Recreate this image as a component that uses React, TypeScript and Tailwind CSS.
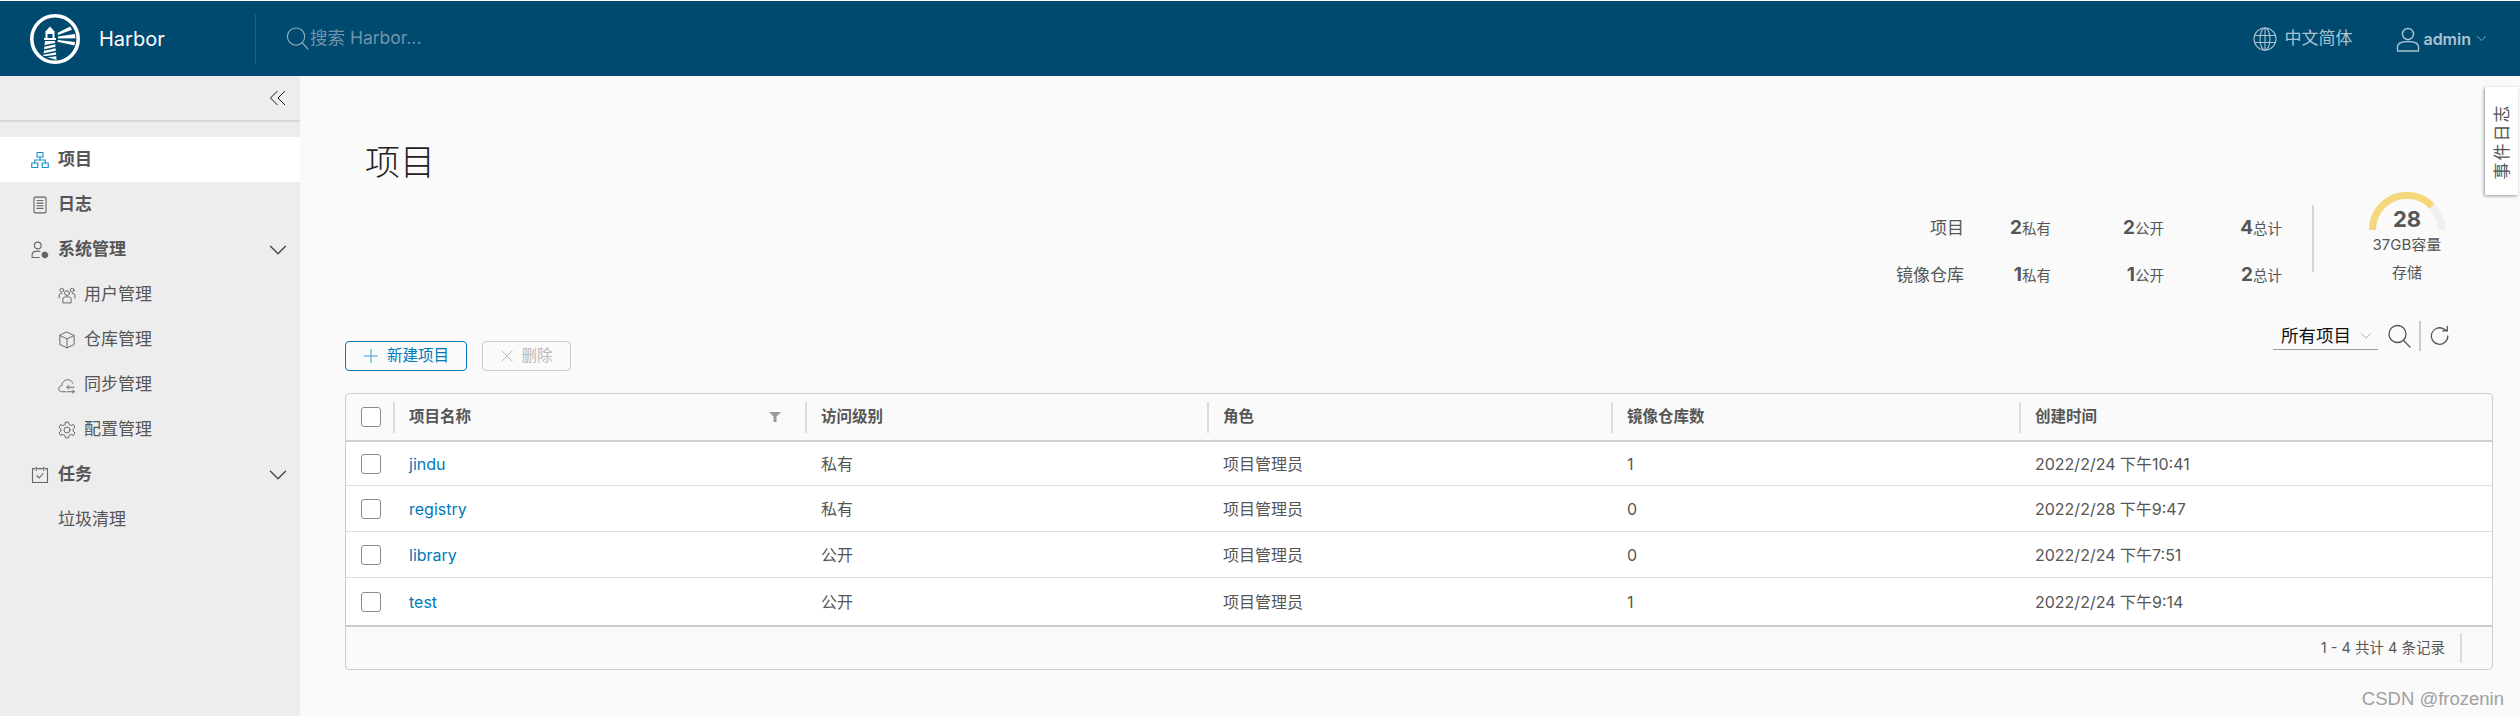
import React from "react";

const S = ({ className, children, vb = "0 0 24 24", sw = 1.3 }: { className: string; children: React.ReactNode; vb?: string; sw?: number }) => (
  <svg viewBox={vb} fill="none" stroke="currentColor" strokeWidth={sw} strokeLinecap="round" strokeLinejoin="round" className={className}>
    {children}
  </svg>
);

const Logo = () => (
  <svg viewBox="0 0 50 50" className="w-[50px] h-[50px]">
    <circle cx="25" cy="25" r="23.2" fill="none" stroke="#fff" strokeWidth="3.6" />
    <path d="M15 18 L20 12.5 L25 18 Z" fill="#fff" />
    <path d="M15.5 18 H24.5 V24 H22.5 V20 H17.5 V24 H15.5 Z" fill="#fff" />
    <path d="M14 24 H26 V26 H14 Z" fill="#fff" />
    <path d="M15 27 L25 27 L26.5 46 L13.5 42 Z" fill="#fff" />
    <path d="M14.5 32 L25.5 29.5 M14.2 36 L25.8 33.5 M14 40 L26 37.5 M14 43 L26.2 41.5" stroke="#004a70" strokeWidth="1.3" />
    <path d="M27.5 19 L40 12.5 L42 15.8 L28 21 Z" fill="#fff" />
    <path d="M28 22.5 L45 20 L45.5 24.2 L28 24.5 Z" fill="#fff" />
    <path d="M28 26 L45 28 L44.5 31.5 L27.5 27.8 Z" fill="#fff" />
  </svg>
);

const Chevron = ({ className }: { className: string }) => (
  <S className={className} sw={1.6}><path d="M3 7.5 L12 16.5 L21 7.5" /></S>
);

const SideHead = ({ icon, label, active, chevron }: { icon: React.ReactNode; label: string; active?: boolean; chevron?: boolean }) => (
  <div className={`h-[45px] flex items-center pl-[31px] pr-[12px] gap-[9px] ${active ? "bg-white" : ""}`}>
    {icon}
    <span className="flex-1 text-[17px] font-bold text-[#565656]">{label}</span>
    {chevron && <Chevron className="w-[20px] h-[20px] text-[#444]" />}
  </div>
);

const SideSub = ({ icon, label }: { icon?: React.ReactNode; label: string }) => (
  <div className="h-[45px] flex items-center gap-[8px] pl-[58px]">
    {icon}
    <span className="text-[17px] text-[#565656]">{label}</span>
  </div>
);

const Sidebar = () => (
  <aside className="w-[300px] shrink-0 bg-[#ededed] flex flex-col">
    <div className="h-[46px] border-b-2 border-[#d7d7d7] flex items-center justify-end pr-[13px] mb-[15px]">
      <S className="w-[18px] h-[18px] text-[#111]" sw={1.3}>
        <path d="M11 3 L2 12 L11 21 M21 3 L12 12 L21 21" />
      </S>
    </div>
    <SideHead active label="项目" icon={
      <S className="w-[18px] h-[18px] text-[#1b8fd0]" sw={1.5}>
        <rect x="8" y="2" width="8" height="6" /><rect x="1" y="16" width="8" height="6" /><rect x="15" y="16" width="8" height="6" />
        <path d="M12 8 V12 M5 16 V12 H19 V16" />
      </S>} />
    <SideHead label="日志" icon={
      <S className="w-[18px] h-[18px] text-[#666]" sw={1.5}>
        <rect x="4" y="1.5" width="16" height="21" rx="1.5" /><path d="M8 6 H16 M8 9.5 H16 M8 13 H16 M8 16.5 H16" />
      </S>} />
    <SideHead chevron label="系统管理" icon={
      <S className="w-[18px] h-[18px] text-[#666]" sw={1.5}>
        <circle cx="9" cy="6" r="4.5" /><path d="M1.5 22 V18 C1.5 15 5 13.5 9 13.5 C10 13.5 11 13.6 12 13.9 M1.5 22 H11" />
        <circle cx="18.5" cy="18.5" r="3.2" fill="currentColor" strokeWidth="2.6" strokeDasharray="2 1" />
      </S>} />
    <SideSub label="用户管理" icon={
      <S className="w-[18px] h-[18px] text-[#666]">
        <circle cx="12" cy="9.5" r="3.2" /><path d="M6.5 22 V17 C6.5 15 9 14.5 12 14.5 C15 14.5 17.5 15 17.5 17 V22 Z" />
        <circle cx="5" cy="5.5" r="2.5" /><circle cx="19" cy="5.5" r="2.5" /><path d="M1.5 16 V12 C1.5 10.5 3 10 5 10 M22.5 16 V12 C22.5 10.5 21 10 19 10" />
      </S>} />
    <SideSub label="仓库管理" icon={
      <S className="w-[18px] h-[18px] text-[#666]">
        <path d="M12 1.5 L21.5 6 V18 L12 22.5 L2.5 18 V6 Z M2.5 6 L12 10.5 L21.5 6 M12 10.5 V22.5" />
      </S>} />
    <SideSub label="同步管理" icon={
      <S className="w-[20px] h-[18px] -ml-[1px] mr-[-1px] text-[#666]">
        <path d="M10 21 H5 C2.5 21 1 19 1 17 C1 14.5 3 13 5 13 C5.5 8 9 5 13 5 C16 5 18.5 6.5 19.5 9.5" />
        <path d="M12 21 H21 M12 15 H21.5 M14.5 12.5 L12 15 L14.5 17.5 M19.5 18.5 L22 21 L19.5 23" />
      </S>} />
    <SideSub label="配置管理" icon={
      <S className="w-[18px] h-[18px] text-[#666]">
        <circle cx="12" cy="12" r="4" />
        <path d="M10 1.5 H14 L14.8 4.7 L17.5 6 L20.5 4.8 L22.5 8.2 L20.2 10.5 V13.5 L22.5 15.8 L20.5 19.2 L17.5 18 L14.8 19.3 L14 22.5 H10 L9.2 19.3 L6.5 18 L3.5 19.2 L1.5 15.8 L3.8 13.5 V10.5 L1.5 8.2 L3.5 4.8 L6.5 6 L9.2 4.7 Z" />
      </S>} />
    <SideHead chevron label="任务" icon={
      <S className="w-[18px] h-[18px] text-[#666]" sw={1.5}>
        <path d="M5 3.5 H2 V22 H22 V3.5 H19 M9 3.5 H15 M7 1.5 V6 M17 1.5 V6" /><path d="M8 13 L11 16 L16 10" />
      </S>} />
    <SideSub label="垃圾清理" />
  </aside>
);

const Stat = ({ n, label }: { n: number; label: string }) => (
  <div className="flex items-baseline justify-end text-[#565656] pb-[3px]">
    <span className="text-[19px] font-bold leading-none">{n}</span>
    <span className="text-[14.5px] leading-none">{label}</span>
  </div>
);

const Stats = () => (
  <div className="flex justify-end h-[100px] items-start">
    <div className="grid grid-cols-[70px_87px_113px_118px] grid-rows-[47px_47px] mt-[14px] items-center">
      <div className="text-right text-[17px] text-[#565656]">项目</div>
      <Stat n={2} label="私有" /><Stat n={2} label="公开" /><Stat n={4} label="总计" />
      <div className="text-right text-[17px] text-[#565656]">镜像仓库</div>
      <Stat n={1} label="私有" /><Stat n={1} label="公开" /><Stat n={2} label="总计" />
    </div>
    <div className="w-[2px] h-[67px] bg-[#d5d5d5] ml-[30px] mt-[14px]" />
    <div className="w-[120px] ml-[33px] mr-[26px] flex flex-col items-center">
      <div className="relative w-[76px] h-[40px]">
        <svg viewBox="0 0 76 40" className="w-[76px] h-[40px]">
          <path d="M3.5 39 A34.5 34.5 0 0 1 72.5 39" fill="none" stroke="#efefef" strokeWidth="7" />
          <path d="M3.5 39 A34.5 34.5 0 0 1 63 15" fill="none" stroke="#f6d87c" strokeWidth="7" />
        </svg>
        <span className="absolute inset-x-0 top-[15px] text-center text-[22px] font-bold leading-[26px] text-[#565656]">28</span>
      </div>
      <div className="text-[15px] text-[#565656] mt-[3px] leading-[22px]">37GB容量</div>
      <div className="text-[15px] text-[#565656] mt-[6px] leading-[22px]">存储</div>
    </div>
  </div>
);

const Toolbar = () => (
  <div className="flex items-start justify-between h-[102px]">
    <div className="flex gap-[15px] mt-[50px]">
      <button className="h-[30px] w-[122px] border border-[#0079b8] rounded-[4px] flex items-center justify-center gap-[8px] text-[15.5px] text-[#0079b8]">
        <S className="w-[16px] h-[16px] text-[#3f9fd3]" sw={1.5}><path d="M12 2 V22 M2 12 H22" /></S>
        新建项目
      </button>
      <button className="h-[30px] w-[89px] border border-[#cccccc] rounded-[4px] flex items-center justify-center gap-[7px] text-[15.5px] text-[#b9b9b9]">
        <S className="w-[14px] h-[14px]" sw={1.6}><path d="M3 3 L21 21 M21 3 L3 21" /></S>
        删除
      </button>
    </div>
    <div className="flex items-center mr-[42px] h-[30px] mt-[30px]">
      <div className="w-[105px] h-[28px] border-b border-[#999] flex items-center pl-[8px] gap-[9px] text-[17.5px] text-[#111] leading-none">
        所有项目
        <Chevron className="w-[12px] h-[12px] text-[#999]" />
      </div>
      <S className="w-[24px] h-[24px] ml-[9px] text-[#555]" sw={1.3}>
        <circle cx="10.5" cy="10" r="8.5" /><path d="M16.5 16.5 L23 23" />
      </S>
      <div className="w-[2px] h-[30px] bg-[#ccc] mx-[8px]" />
      <S className="w-[22px] h-[22px] text-[#555]" sw={1.4}>
        <path d="M20.5 12 A9 9 0 1 1 15.5 4 L20 6.5 M20 1.5 V6.5 H15" />
      </S>
    </div>
  </div>
);

const Box = () => <div className="w-[20px] h-[20px] rounded-[3px] border border-[#8c8c8c] bg-white" />;

const rows = [
  ["jindu", "私有", "项目管理员", "1", "2022/2/24 下午10:41", "h-[44px] border-b border-[#dddddd]"],
  ["registry", "私有", "项目管理员", "0", "2022/2/28 下午9:47", "h-[46px] border-b border-[#dddddd]"],
  ["library", "公开", "项目管理员", "0", "2022/2/24 下午7:51", "h-[46px] border-b border-[#dddddd]"],
  ["test", "公开", "项目管理员", "1", "2022/2/24 下午9:14", "h-[47px]"],
];

const Sep = () => <div className="w-[2px] h-[31px] bg-[#dcdcdc] shrink-0" />;

const HeadCell = ({ className, label, filter }: { className: string; label: string; filter?: boolean }) => (
  <div className={`flex items-center ${className}`}>
    <Sep />
    <span className="pl-[14px] flex-1 text-[15.5px] font-bold text-[#565656]">{label}</span>
    {filter && (
      <svg viewBox="0 0 12 10" className="w-[12px] h-[10px] mr-[24px] text-[#999]" fill="currentColor"><path d="M0 0 H12 L7.5 4.5 V10 H4.5 V4.5 Z" /></svg>
    )}
  </div>
);

const Table = () => (
  <div className="border border-[#cccccc] rounded-[4px] bg-[#fafafa] overflow-hidden">
    <div className="h-[48px] flex items-center border-b-2 border-[#d0d0d0]">
      <div className="w-[47px] pl-[15px] shrink-0"><Box /></div>
      <HeadCell className="w-[412px] shrink-0" label="项目名称" filter />
      <HeadCell className="w-[402px] shrink-0" label="访问级别" />
      <HeadCell className="w-[404px] shrink-0" label="角色" />
      <HeadCell className="w-[408px] shrink-0" label="镜像仓库数" />
      <HeadCell className="flex-1" label="创建时间" />
    </div>
    {rows.map((r) => (
      <div key={r[0]} className={`${r[5]} bg-white flex items-center text-[16px] text-[#565656]`}>
        <div className="w-[47px] pl-[15px] shrink-0"><Box /></div>
        <div className="w-[412px] shrink-0 pl-[16px] text-[#0079b8]">{r[0]}</div>
        <div className="w-[402px] shrink-0 pl-[16px]">{r[1]}</div>
        <div className="w-[404px] shrink-0 pl-[16px]">{r[2]}</div>
        <div className="w-[408px] shrink-0 pl-[16px]">{r[3]}</div>
        <div className="flex-1 pl-[16px]">{r[4]}</div>
      </div>
    ))}
    <div className="h-[44px] border-t-2 border-[#cccccc] flex items-center justify-end text-[14.5px] text-[#565656]">
      <span>1 - 4 共计 4 条记录</span>
      <div className="w-[2px] h-[30px] bg-[#dcdcdc] ml-[15px] mr-[30px]" />
    </div>
  </div>
);

export default function App() {
  return (
    <div className="relative h-[716px] w-[2520px] overflow-hidden flex flex-col bg-[#fafafa] [font-family:Inter,'Noto_Sans_CJK_SC',sans-serif]">
      <header className="mt-[1px] h-[75px] shrink-0 bg-[#004a70] flex items-center">
        <div className="w-[256px] h-[50px] border-r border-[#1f5f80] flex items-center pl-[30px] gap-[19px] shrink-0">
          <Logo />
          <span className="text-[20px] text-white">Harbor</span>
        </div>
        <div className="flex-1 flex items-center pl-[30px] gap-[1px] text-[#6f95a9]">
          <S className="w-[23px] h-[23px] text-[#9ab8c7]" sw={1.1}>
            <circle cx="10.5" cy="10" r="9" /><path d="M17 16.5 L23 23" />
          </S>
          <span className="text-[17.5px]">搜索 Harbor...</span>
        </div>
        <div className="flex items-center pr-[33px] text-[#a9c4d1]">
          <S className="w-[24px] h-[24px]" sw={1.1}>
            <circle cx="12" cy="12" r="11" /><ellipse cx="12" cy="12" rx="5" ry="11" /><path d="M12 1 V23 M1.5 8.5 H22.5 M1.5 15.5 H22.5" />
          </S>
          <span className="text-[17px] ml-[7px]">中文简体</span>
          <S className="w-[24px] h-[26px] ml-[44px]" sw={1.4}>
            <circle cx="12" cy="7" r="5.5" /><path d="M1.5 24 V20 C1.5 16 6 14.5 12 14.5 C18 14.5 22.5 16 22.5 20 V24 Z" />
          </S>
          <span className="text-[16px] font-semibold ml-[3px]">admin</span>
          <Chevron className="w-[11px] h-[11px] ml-[5px]" />
        </div>
      </header>
      <div className="flex flex-1">
        <Sidebar />
        <main className="flex-1 pl-[45px] pr-[27px]">
          <h1 className="text-[35px] leading-[44px] text-[#222] pl-[20px] pt-[64px] font-light">项目</h1>
          <div className="mt-[7px]"><Stats /></div>
          <Toolbar />
          <Table />
        </main>
      </div>
      <div className="absolute right-[2px] top-[87px] w-[33px] h-[108px] bg-white shadow-[-1px_1px_3px_rgba(0,0,0,0.4)] flex items-center justify-center">
        <span className="-rotate-90 whitespace-nowrap text-[17px] tracking-[2px] text-[#565656] leading-none">事件日志</span>
      </div>
      <div className="absolute right-[16px] top-[688px] [font-family:'Liberation_Sans',sans-serif] text-[18.5px] leading-[22px] text-[#a0a0a0]">CSDN @frozenin</div>
    </div>
  );
}
